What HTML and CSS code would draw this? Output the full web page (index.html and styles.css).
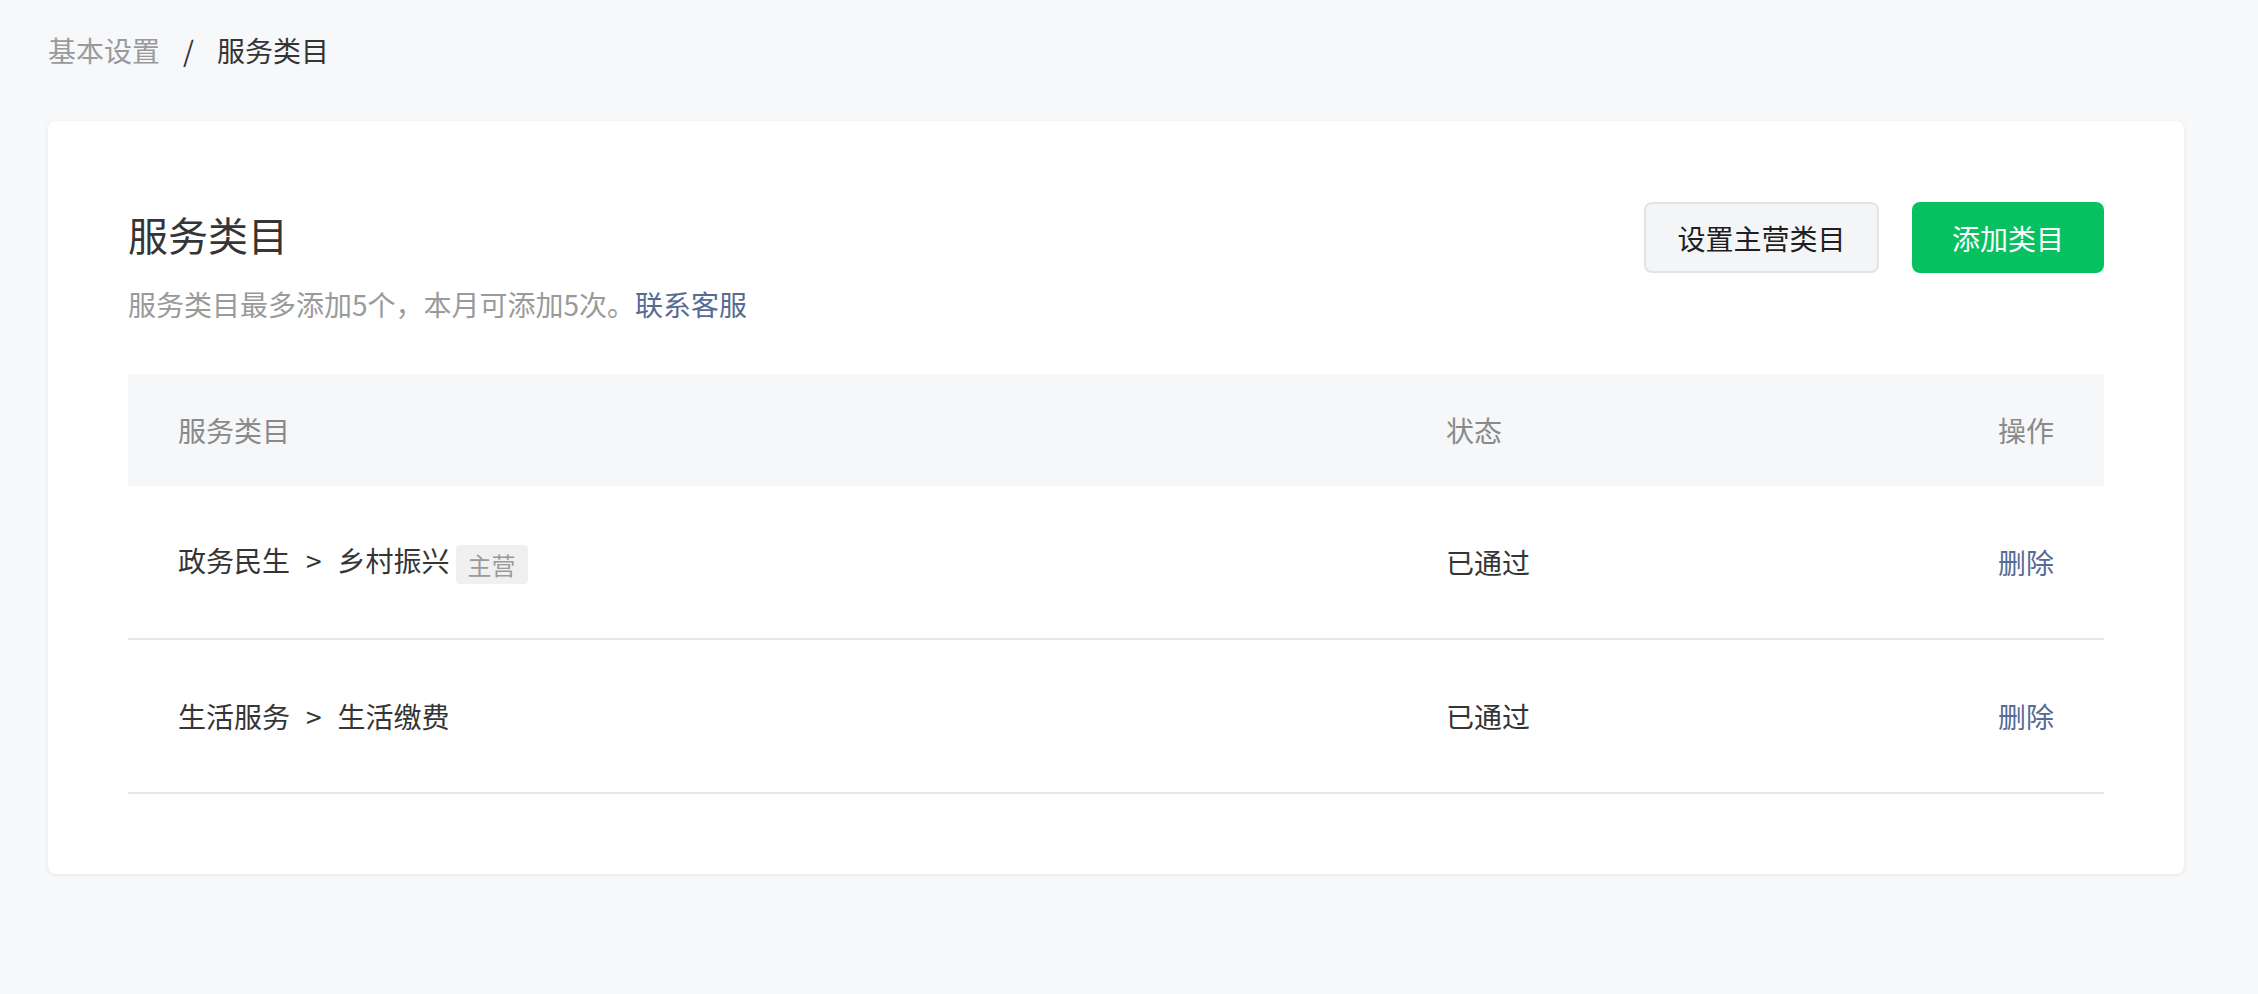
FILE: index.html
```
<!DOCTYPE html>
<html lang="zh-CN">
<head>
<meta charset="utf-8">
<title>服务类目</title>
<link rel="stylesheet" href="styles.css">
</head>
<body>
<div class="page">
  <nav class="breadcrumb">
    <span class="crumb-link">基本设置</span>
    <span class="crumb-sep">/</span>
    <span class="crumb-current">服务类目</span>
  </nav>
  <section class="card">
    <div class="card-head">
      <div class="head-text">
        <h1 class="title">服务类目</h1>
        <p class="subtitle">服务类目最多添加5个，本月可添加5次。<a class="link">联系客服</a></p>
      </div>
      <div class="actions">
        <button class="btn btn-default">设置主营类目</button>
        <button class="btn btn-primary">添加类目</button>
      </div>
    </div>
    <div class="table">
      <div class="tr thead">
        <div class="td">服务类目</div>
        <div class="td">状态</div>
        <div class="td col-op">操作</div>
      </div>
      <div class="tr row">
        <div class="td">政务民生<span class="sep">&gt;</span>乡村振兴<span class="tag">主营</span></div>
        <div class="td">已通过</div>
        <div class="td col-op"><a class="link">删除</a></div>
      </div>
      <div class="tr row">
        <div class="td">生活服务<span class="sep">&gt;</span>生活缴费</div>
        <div class="td">已通过</div>
        <div class="td col-op"><a class="link">删除</a></div>
      </div>
    </div>
  </section>
</div>
</body>
</html>
```
FILE: styles.css
```
* { box-sizing: border-box; }
html, body {
  margin: 0;
  padding: 0;
  background: #f7f8fa;
}
body {
  font-family: "Noto Sans CJK SC", "Noto Sans", sans-serif;
  font-size: 28px;
  color: #353535;
}
.page {
  padding: 30px 74px 40px 48px;
}
.breadcrumb {
  line-height: 40px;
  height: 40px;
  display: flex;
  align-items: center;
}
.crumb-link { color: #9a9a9a; }
.crumb-sep { color: #353535; margin: 0 23px; }
.crumb-current { color: #353535; }

.card {
  margin-top: 51px;
  background: #fff;
  border-radius: 8px;
  box-shadow: 0 1px 4px rgba(0, 0, 0, 0.08);
  padding: 81px 80px 80px;
}
.card-head {
  display: flex;
  justify-content: space-between;
  align-items: flex-start;
}
.title {
  margin: 0;
  font-size: 40px;
  line-height: 64px;
  font-weight: 400;
  color: #353535;
}
.subtitle {
  margin: 18px 0 0;
  font-size: 28px;
  line-height: 40px;
  color: #9a9a9a;
}
.link {
  color: #576b95;
  text-decoration: none;
  cursor: pointer;
}
.actions {
  display: flex;
  gap: 33px;
}
.btn {
  font-family: inherit;
  font-size: 28px;
  height: 71px;
  border-radius: 8px;
  padding: 0;
  cursor: pointer;
}
.btn-default {
  width: 235px;
  background: #f4f5f7;
  border: 2px solid #e2e3e6;
  color: #1f1f1f;
}
.btn-primary {
  width: 192px;
  background: #07c160;
  border: 0;
  color: #fff;
}

.table {
  margin-top: 50px;
}
.tr {
  display: grid;
  grid-template-columns: 1268px 1fr auto;
  align-items: center;
  padding: 0 50px;
}
.thead {
  height: 112px;
  background: #f6f7f9;
  color: #8a8a8a;
}
.row {
  height: 154px;
  border-bottom: 2px solid #e6e6ea;
  color: #353535;
}
.col-op { text-align: right; }
.sep {
  margin: 0 16px;
}
.tag {
  display: inline-block;
  margin-left: 6px;
  padding: 0 12px;
  height: 39px;
  line-height: 39px;
  font-size: 24px;
  color: #9a9a9a;
  background: #f0f0f0;
  border-radius: 4px;
  vertical-align: middle;
}
```
